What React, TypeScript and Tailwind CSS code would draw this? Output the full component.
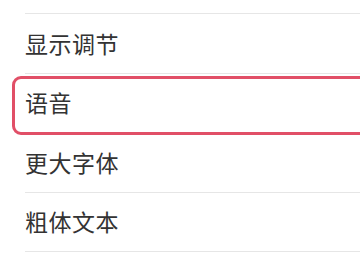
import React from "react";

const font = { fontFamily: '"Noto Sans CJK SC", "Noto Sans", sans-serif' };

export default function App() {
  const rows = ["显示调节", "语音", "更大字体", "粗体文本", "按钮形状"];
  return (
    <div className="w-[360px] h-[270px] overflow-hidden bg-white" style={font}>
      <div className="h-[14px] ml-[25px] border-b border-[#e6e6e6]" />
      {rows.map((r, i) => (
        <div key={r} className="relative h-[59.5px]">
          <div className="h-full ml-[25px] border-b border-[#e6e6e6] flex items-center">
            <span className="text-[23px] leading-none text-[#333333] tracking-[0.5px]">{r}</span>
          </div>
          {i === 1 && (
            <div className="absolute left-[12px] top-[2px] w-[370px] h-[59px] border-[3px] border-[#e14f67] rounded-[9px]" />
          )}
        </div>
      ))}
    </div>
  );
}
